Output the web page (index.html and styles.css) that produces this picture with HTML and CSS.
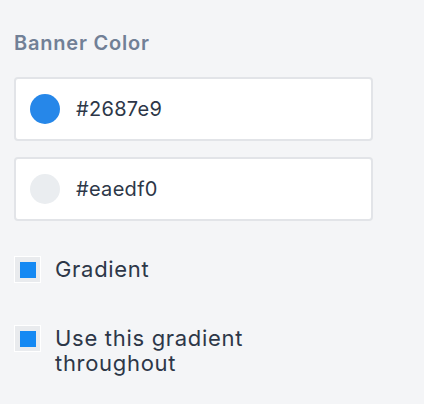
FILE: index.html
```html
<!DOCTYPE html>
<html>
<head>
<meta charset="utf-8">
<link rel="stylesheet" href="styles.css">
</head>
<body>
<div class="panel">
  <div class="label">Banner Color</div>
  <div class="field">
    <span class="swatch blue"></span>
    <span class="value">#2687e9</span>
  </div>
  <div class="field">
    <span class="swatch grey"></span>
    <span class="value">#eaedf0</span>
  </div>
  <div class="check">
    <span class="box"><span class="mark"></span></span>
    <span class="ctext">Gradient</span>
  </div>
  <div class="check">
    <span class="box"><span class="mark"></span></span>
    <span class="ctext">Use this gradient throughout</span>
  </div>
</div>
</body>
</html>
```

FILE: styles.css
```css
html, body {
  margin: 0;
  padding: 0;
  background: #f4f5f7;
}
body {
  font-family: Inter, "Noto Sans", sans-serif;
  width: 424px;
  height: 404px;
  overflow: hidden;
}
.panel {
  padding: 30px 51px 0 14px;
  display: flex;
  flex-direction: column;
}
.label {
  font-size: 20px;
  font-weight: 600;
  color: #718096;
  line-height: 26px;
  letter-spacing: 0.8px;
  margin-bottom: 21px;
}
.field {
  height: 60px;
  background: #fff;
  border: 2px solid #e2e4e8;
  border-radius: 4px;
  display: flex;
  align-items: center;
  padding-left: 14px;
  gap: 16px;
  margin-bottom: 16px;
}
.swatch {
  width: 30px;
  height: 30px;
  border-radius: 50%;
  flex: none;
}
.swatch.blue { background: #2687e9; }
.swatch.grey { background: #eaedf0; }
.value {
  font-size: 20px;
  letter-spacing: 0.3px;
  color: #2d3748;
}
.check {
  display: flex;
  align-items: flex-start;
  gap: 14px;
  margin-top: 20px;
}
.check + .check { margin-top: 43px; }
.box {
  width: 27px;
  height: 27px;
  box-sizing: border-box;
  border: 1px solid #fff;
  background: #e9ebee;
  display: flex;
  align-items: center;
  justify-content: center;
  flex: none;
  margin-top: -1px;
}
.mark {
  width: 16px;
  height: 16px;
  background: #1589f3;
}
.ctext {
  font-size: 22px;
  line-height: 25px;
  letter-spacing: 0.7px;
  color: #2d3748;
  max-width: 230px;
}
```
